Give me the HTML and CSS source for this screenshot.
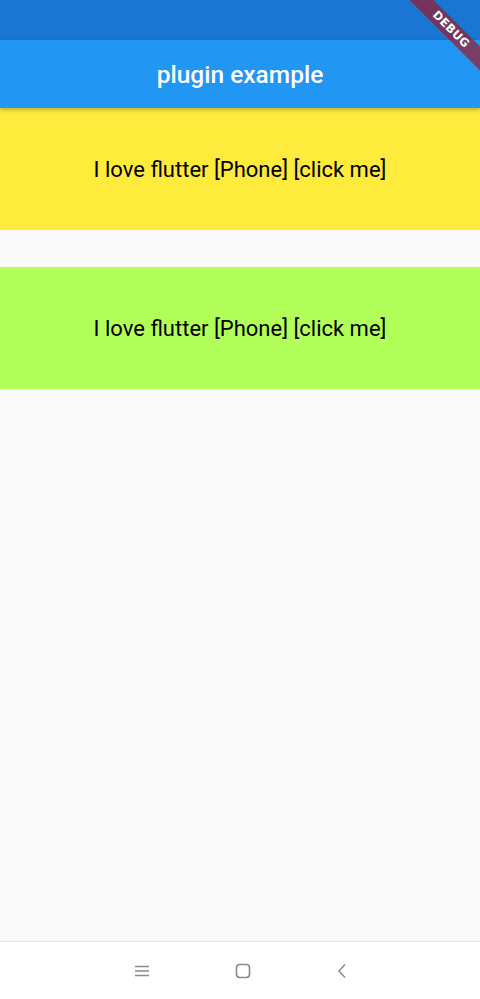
FILE: index.html
```html
<!DOCTYPE html>
<html>
<head>
<meta charset="utf-8">
<link rel="stylesheet" href="styles.css">
</head>
<body>
<div class="screen">
  <div class="status"></div>
  <header class="appbar">plugin example</header>
  <main class="content">
    <div class="tile yellow">I love flutter [Phone] [click me]</div>
    <div class="tile green">I love flutter [Phone] [click me]</div>
  </main>
  <nav class="navbar">
    <svg class="ico" width="16" height="14" viewBox="0 0 16 14"><path d="M1 2.5h14M1 7h14M1 11.5h14" stroke="#8a8a8a" stroke-width="1.4" fill="none"/></svg>
    <svg class="ico" width="18" height="18" viewBox="0 0 18 18"><rect x="2.5" y="2.5" width="13" height="13" rx="3.2" stroke="#8a8a8a" stroke-width="1.6" fill="none"/></svg>
    <svg class="ico" width="12" height="18" viewBox="0 0 12 18"><path d="M9 2.5L3 9l6 6.5" stroke="#8a8a8a" stroke-width="1.5" fill="none"/></svg>
  </nav>
  <div class="banner">DEBUG</div>
</div>
</body>
</html>
```
FILE: styles.css
```css
html, body {
  margin: 0;
  padding: 0;
}
body {
  width: 480px;
  height: 999px;
  overflow: hidden;
  background: #fafafa;
  font-family: Roboto, "Noto Sans", sans-serif;
}
.screen {
  position: relative;
  width: 480px;
  height: 999px;
  display: flex;
  flex-direction: column;
  overflow: hidden;
}
.status {
  height: 40px;
  background: #1976d2;
}
.appbar {
  height: 68px;
  background: #2196f3;
  color: #fff;
  font-size: 24.5px;
  font-weight: 500;
  display: flex;
  align-items: center;
  justify-content: center;
  box-shadow: 0 2px 4px rgba(0,0,0,0.25);
  position: relative;
  z-index: 1;
}
.content {
  flex: 1;
  display: flex;
  flex-direction: column;
  gap: 37px;
}
.tile {
  height: 122px;
  display: flex;
  align-items: center;
  justify-content: center;
  font-size: 22px;
  color: #000;
}
.yellow { background: #ffeb3b; }
.green { background: #b2ff59; }
.navbar {
  height: 57px;
  background: #fff;
  border-top: 1px solid #e4e4e4;
  display: flex;
  align-items: center;
  justify-content: center;
  gap: 84px;
  padding-left: 2px;
}
.banner {
  position: absolute;
  top: 21px;
  left: 391px;
  width: 120px;
  height: 17px;
  line-height: 17px;
  background: rgba(160, 20, 35, 0.68);
  color: #fff;
  font-family: "DejaVu Sans", sans-serif;
  font-size: 11.5px;
  font-weight: bold;
  text-align: center;
  letter-spacing: 0.3px;
  transform: rotate(45deg);
  z-index: 5;
}
```
